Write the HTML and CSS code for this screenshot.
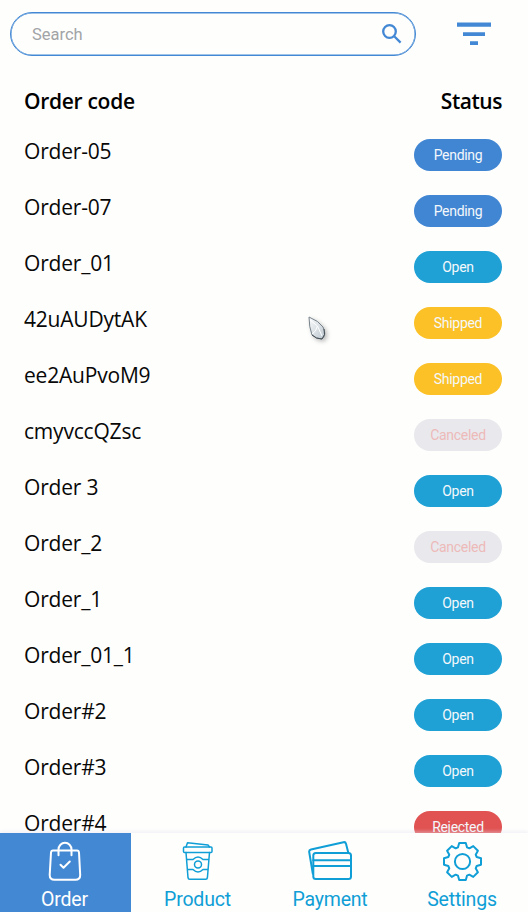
FILE: index.html
```html
<!DOCTYPE html>
<html lang="en">
<head>
<meta charset="utf-8">
<title>Orders</title>
<link rel="stylesheet" href="styles.css">
</head>
<body>
<div class="app">
  <header class="toolbar">
    <div class="search">
      <input class="search-input" type="text" placeholder="Search" aria-label="Search">
      <svg class="search-icon" width="22" height="22" viewBox="0 0 22 22"><circle cx="8.5" cy="8.5" r="6.3"/><path d="M13.2 13.2L19.6 19.6"/></svg>
    </div>
    <svg class="filter-icon" width="34" height="24" viewBox="0 0 34 24"><path d="M0 .6h34v4.2H0zM6 10.2h22v3.8H6zM13 19.2h8v3.8h-8z"/></svg>
  </header>
  <main class="orders">
    <div class="heading"><span>Order code</span><span class="status-label">Status</span></div>
    <div class="row"><span class="code">Order-05</span><span class="pill pending">Pending</span></div>
    <div class="row"><span class="code">Order-07</span><span class="pill pending">Pending</span></div>
    <div class="row"><span class="code">Order_01</span><span class="pill open">Open</span></div>
    <div class="row"><span class="code">42uAUDytAK</span><span class="pill shipped">Shipped</span></div>
    <div class="row"><span class="code">ee2AuPvoM9</span><span class="pill shipped">Shipped</span></div>
    <div class="row"><span class="code">cmyvccQZsc</span><span class="pill canceled">Canceled</span></div>
    <div class="row"><span class="code">Order 3</span><span class="pill open">Open</span></div>
    <div class="row"><span class="code">Order_2</span><span class="pill canceled">Canceled</span></div>
    <div class="row"><span class="code">Order_1</span><span class="pill open">Open</span></div>
    <div class="row"><span class="code">Order_01_1</span><span class="pill open">Open</span></div>
    <div class="row"><span class="code">Order#2</span><span class="pill open">Open</span></div>
    <div class="row"><span class="code">Order#3</span><span class="pill open">Open</span></div>
    <div class="row"><span class="code">Order#4</span><span class="pill rejected">Rejected</span></div>
  </main>
  <nav class="tabs">
    <a class="tab active">
      <svg width="44" height="42" viewBox="0 0 44 42"><path d="M10 9.5h24q1.8 0 2 2l1.2 22.5q0 4.8-4.8 4.8H11.5q-4.8 0-4.8-4.8L8 11.5q.2-2 2-2z"/><path d="M15.5 14.2V8.5a6.500 6.800 0 0 1 13 0v5.700"/><path d="M17.500 23.800l3 3 6.300-6.300"/></svg>
      <span>Order</span>
    </a>
    <a class="tab">
      <svg class="thin" width="44" height="42" viewBox="0 0 44 42"><rect x="7.500" y="6" width="28.500" height="5.500" rx="1"/><path d="M10 6l1.500-4.200L32 4l1.500 2M10 11.500l2 25.200q.2 1.600 1.600 1.600h16.200q1.400 0 1.600-1.600l2.100-25.200M10.800 18.500h6.200q2.500-2.500 5-2.500t5 2.500h6M11.700 28.500h5.300q2.500 2.500 5 2.500t5-2.500h5.200"/><circle cx="22" cy="23.600" r="3.500"/></svg>
      <span>Product</span>
    </a>
    <a class="tab">
      <svg width="44" height="42" viewBox="0 0 44 42"><rect x="5.300" y="12" width="37.700" height="26" rx="2.500"/><path d="M5.300 19.200H43M5.300 25H43M4.800 32.500L1.200 11Q.9 9 3 8.500L35.500 1.200q2-.4 2.500 1.500l2.300 9"/></svg>
      <span>Payment</span>
    </a>
    <a class="tab">
      <svg width="44" height="42" viewBox="-22.500 -20.500 44 42"><path d="M-3.300-18.500H3.300L4.500-14.200L6.860-13.200L10.750-15.400L15.400-10.750L13.200-6.860L14.200-4.500L18.500-3.300V3.300L14.200 4.500L13.200 6.860L15.400 10.750L10.750 15.400L6.860 13.200L4.500 14.200L3.300 18.500H-3.300L-4.500 14.200L-6.860 13.200L-10.750 15.400L-15.400 10.750L-13.200 6.860L-14.200 4.500L-18.500 3.300V-3.300L-14.200-4.500L-13.200-6.860L-15.400-10.750L-10.750-15.400L-6.860-13.200L-4.500-14.200z"/><circle r="7.600"/></svg>
      <span>Settings</span>
    </a>
  </nav>
  <svg class="cursor" width="26" height="30" viewBox="0 0 26 30">
    <defs><linearGradient id="glass" x1="0" y1="0" x2="1" y2="1"><stop offset="0" stop-color="#fafbfc"/><stop offset="1" stop-color="#bcc7cf"/></linearGradient></defs>
    <path d="M3 2Q13 6 17 12Q21 20 16 24Q10 24 6 20Q3 12 3 2z" fill="url(#glass)" stroke="#77828a" stroke-width="1"/>
    <path d="M6 19Q10 17 11.500 11L16 21M4 5L11.500 11" fill="none" stroke="#fff" stroke-width="1"/>
    <path d="M6 20Q10 24 16 24Q20 20 18 14" fill="none" stroke="#454e55" stroke-width="1"/>
  </svg>
</div>
</body>
</html>
```
FILE: styles.css
```css
* { box-sizing: border-box; }
body { margin: 0; background: #fefefd; }
.app {
  position: relative;
  display: flex;
  flex-direction: column;
  height: 912px;
  overflow: hidden;
  font-family: Roboto, sans-serif;
}
.toolbar {
  display: flex;
  align-items: center;
  gap: 42px;
  flex: none;
  height: 68px;
  padding-left: 10px;
}
.search {
  display: flex;
  align-items: center;
  width: 406px;
  height: 44px;
  padding: 0 12px 0 21px;
  border: 1px solid #4388d4;
  border-radius: 22px;
  box-shadow: inset 0 0 0 .5px #4388d4;
}
.search-input {
  flex: 1;
  min-width: 0;
  padding: 1px 0 0;
  border: 0;
  outline: 0;
  background: none;
  font: 16.500px Roboto, sans-serif;
}
.search-input::placeholder { color: #a2a4a7; opacity: 1; }
.search-icon { fill: none; stroke: #4388d4; stroke-width: 2.300; }
.filter-icon { flex: none; margin-left: -1px; fill: #4388d4; }
.orders { flex: 1; min-height: 0; overflow: hidden; padding: 0 26px 0 24px; }
.heading {
  display: flex;
  justify-content: space-between;
  height: 59px;
  padding-top: 18px;
  font: 600 21px/30px "Open Sans", sans-serif;
  letter-spacing: -.3px;
  color: #000;
}
.status-label { letter-spacing: -.45px; }
.row { display: flex; align-items: center; justify-content: space-between; height: 56px; }
.code {
  margin-bottom: 8px;
  font: 21px/28px "Open Sans", sans-serif;
  letter-spacing: -.2px;
  color: #080808;
}
.pill {
  width: 88px;
  height: 32px;
  border-radius: 16px;
  font-size: 14px;
  letter-spacing: -.3px;
  line-height: 33px;
  text-align: center;
  color: #f4f8fb;
}
.pending { background: #4186d3; }
.open { background: #1fa1d5; }
.shipped { background: #fbc126; }
.canceled { background: #e9e9ed; color: #edb9b9; }
.rejected { background: #e15353; }
.tabs {
  display: grid;
  grid-template-columns: 131px 133px 132px 132px;
  flex: none;
  height: 79px;
  box-shadow: 0 -2px 3px rgba(225, 227, 240, .4);
  background: #fefefd;
}
.tab {
  display: flex;
  flex-direction: column;
  align-items: center;
  padding-top: 8px;
  font-size: 19.500px;
  letter-spacing: -.2px;
  line-height: 33px;
  color: #109ed6;
}
.tab svg { fill: none; stroke: currentColor; stroke-width: 2; stroke-linejoin: round; stroke-linecap: round; }
.tab svg.thin { stroke-width: 1.500; }
.active { background: #4388d3; color: #fff; }
.active svg, .active span { margin-left: -2px; }
.cursor { position: absolute; left: 306px; top: 315px; filter: drop-shadow(2px 2px 2px #bbb); }
```
